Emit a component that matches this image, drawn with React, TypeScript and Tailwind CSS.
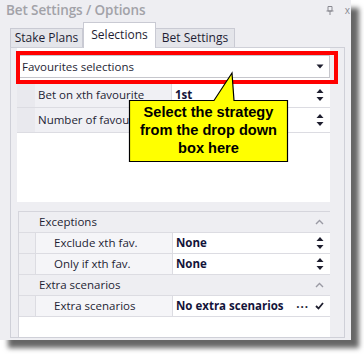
import React from 'react';

function Spin() {
  return (
    <svg width="8" height="18" viewBox="0 0 8 18" className="shrink-0">
      <path d="M0.5 7 L4 3 L7.5 7 Z" fill="#1e1e2e" />
      <path d="M0.5 11 L4 15 L7.5 11 Z" fill="#1e1e2e" />
    </svg>
  );
}

function Chevron() {
  return (
    <svg width="9" height="6" viewBox="0 0 9 6">
      <path d="M1 5 L4.5 1.5 L8 5" stroke="#9a9aa4" strokeWidth="1.4" fill="none" />
    </svg>
  );
}

function UpperRow({ label, value }: { label: string; value: string }) {
  return (
    <div className="flex h-[25px] border-b border-[#dcdce2]">
      <div className="w-[18px] bg-[#e9e9ee]" />
      <div className="w-[137px] bg-[#f0f0f4] border-r border-[#dcdce2] pl-[3px] flex items-center whitespace-nowrap overflow-hidden">
        {label}
      </div>
      <div className="flex-1 flex items-center justify-between pl-[3px] pr-[6px]">
        <span className="font-bold text-[#14143a]">{value}</span>
        <Spin />
      </div>
    </div>
  );
}

function Category({ label }: { label: string }) {
  return (
    <div className="flex h-[21px] items-center justify-between bg-[#eeeef2] border-b border-[#dcdce2] pl-[20px] pr-[6px]">
      <span>{label}</span>
      <Chevron />
    </div>
  );
}

function LowerRow({ label, value, extra }: { label: string; value: string; extra?: boolean }) {
  return (
    <div className="flex h-[21px] border-b border-[#dcdce2]">
      <div className="w-[16px] bg-[#eeeef2]" />
      <div className="w-[138px] bg-[#f5f5f8] border-l border-r border-[#dcdce2] pl-[18px] flex items-center whitespace-nowrap">
        {label}
      </div>
      <div className="flex-1 flex items-center justify-between pl-[3px] pr-[6px]">
        <span className="font-bold text-[#14143a]">{value}</span>
        {extra ? (
          <div className="flex items-center gap-[6px]">
            <span className="font-bold tracking-[1px] leading-none -mt-[4px]">...</span>
            <svg width="9" height="8" viewBox="0 0 9 8">
              <path d="M1 4 L3.5 6.5 L8 1" stroke="#1e1e2e" strokeWidth="1.8" fill="none" />
            </svg>
          </div>
        ) : (
          <Spin />
        )}
      </div>
    </div>
  );
}

export default function App() {
  return (
    <div className="relative w-[364px] h-[354px] bg-white overflow-hidden font-['Open_Sans',sans-serif] text-[11.5px] text-[#1e1e34]">
      <div className="w-[351px] h-[340px] bg-[#eeeef2] shadow-[8px_8px_5px_rgba(0,0,0,0.6)] flex flex-col">
        {/* title bar */}
        <div className="h-[20px] flex items-center justify-between pl-[6px] pr-[1px]">
          <span className="font-semibold text-[13.5px] text-[#a2a2a8] tracking-[-0.1px]">Bet Settings / Options</span>
          <div className="flex items-center gap-[11px]">
            <svg width="8" height="9" viewBox="0 0 8 9">
              <path d="M2 0.5 H6 V5 H2 Z M0.5 5 H7.5 M4 5 V9" stroke="#8a8a92" strokeWidth="1" fill="none" />
            </svg>
            <span className="text-[10px] text-[#8a8a92] leading-none">x</span>
          </div>
        </div>

        {/* tabs */}
        <div className="h-[27px] flex items-end pl-[10px] text-[12px]">
          <div className="h-[19px] w-[73px] border border-b-0 border-[#c9cad3] bg-[#e4e5ea] flex items-center justify-center">
            Stake Plans
          </div>
          <div className="relative z-10 h-[26px] -mb-px w-[73px] border border-b-0 border-[#c9cad3] bg-white flex items-center justify-center pb-[2px]">
            Selections
          </div>
          <div className="h-[19px] w-[79px] border border-b-0 border-l-0 border-[#c9cad3] bg-[#e4e5ea] flex items-center justify-center">
            Bet Settings
          </div>
        </div>

        {/* tab content */}
        <div className="flex-1 ml-[10px] mr-[6px] mb-[2px] border border-[#cfd0d8] flex flex-col pl-[6px] pr-[14px]">
          <div className="h-[154px] bg-white pt-[7px] flex flex-col">
            <div className="h-[23px] border border-[#c6c6cc] flex items-center justify-between pl-[4px] pr-[5px]">
              <span>Favourites selections</span>
              <svg width="8" height="5" viewBox="0 0 8 5">
                <path d="M0.5 0.5 H7.5 L4 4.5 Z" fill="#1e1e2e" />
              </svg>
            </div>
            <div className="mt-[5px]">
              <UpperRow label="Bet on xth favourite" value="1st" />
              <UpperRow label="Number of favourites" value="" />
            </div>
          </div>
          <div className="h-[9px]" />
          <div className="flex-1 bg-white border-t border-l border-[#d5d5dc] ml-[1px]">
            <Category label="Exceptions" />
            <LowerRow label="Exclude xth fav." value="None" />
            <LowerRow label="Only if xth fav." value="None" />
            <Category label="Extra scenarios" />
            <LowerRow label="Extra scenarios" value="No extra scenarios" extra />
          </div>
        </div>
      </div>

      {/* red highlight */}
      <div className="absolute left-[16px] top-[51px] w-[322px] h-[33px] border-4 border-[#ff0000]" />

      {/* callout */}
      <svg className="absolute left-[127px] top-[71px]" width="163" height="93" viewBox="127 71 163 93">
        <path
          d="M129.5 100.5 H214 L232 73 L234 100.5 H287.5 V161.5 H129.5 Z"
          fill="#ffff00"
          stroke="#000000"
          strokeWidth="1.2"
        />
      </svg>
      <div className="absolute left-[130px] top-[103px] w-[157px] text-center font-['Liberation_Sans',sans-serif] font-bold text-[14.6px] leading-[18px] text-black">
        Select the strategy
        <br />
        from the drop down
        <br />
        box here
      </div>
    </div>
  );
}
